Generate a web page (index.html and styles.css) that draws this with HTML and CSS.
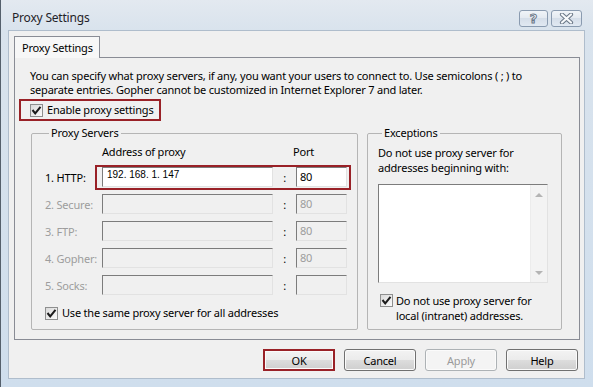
FILE: index.html
```html
<!DOCTYPE html>
<html lang="en">
<head>
    <meta charset="UTF-8">
    <title>Proxy Settings</title>
    <link rel="stylesheet" href="styles.css">
</head>
<body>
    <div class="window">
        <div class="titlebar">
            <span class="title">Proxy Settings</span>
            <div class="caption-btns">
                <button class="cap-btn help-btn">?</button>
                <button class="cap-btn close-btn">
                    <svg width="15" height="11" viewBox="0 0 15 11">
                        <path d="M3 1.5 L12 9.5 M12 1.5 L3 9.5" stroke="#6b7888" stroke-width="4.2" stroke-linecap="round"/>
                        <path d="M3 1.5 L12 9.5 M12 1.5 L3 9.5" stroke="#f7f9fb" stroke-width="2.2" stroke-linecap="round"/>
                    </svg>
                </button>
            </div>
        </div>

        <div class="client">
            <div class="tabs">
                <div class="tab">Proxy Settings</div>
            </div>

            <div class="panel">
                <p class="intro">You can specify what proxy servers, if any, you want your users to connect to. Use semicolons ( ; ) to<br>separate entries. Gopher cannot be customized in Internet Explorer 7 and later.</p>

                <label class="check highlight">
                    <span class="box"><svg width="11" height="11" viewBox="0 0 11 11"><path d="M1.5 5 L4.2 8.3 L9.5 1.8" fill="none" stroke="#1c1c1c" stroke-width="2"/></svg></span>
                    Enable proxy settings
                </label>

                <div class="groups">
                    <fieldset class="servers">
                        <legend>Proxy Servers</legend>
                        <div class="server-grid">
                            <span></span>
                            <span class="col-head">Address of proxy</span>
                            <span></span>
                            <span class="col-head port-head">Port</span>

                            <span class="row-label r1 c1">1. HTTP:</span>
                            <div class="field addr r1 c2">192. 168. 1. 147</div>
                            <span class="colon r1 c3">:</span>
                            <div class="field port r1 c4">80</div>
                            <div class="row-mark"></div>

                            <span class="row-label off">2. Secure:</span>
                            <div class="field off"></div>
                            <span class="colon">:</span>
                            <div class="field port off">80</div>

                            <span class="row-label off">3. FTP:</span>
                            <div class="field off"></div>
                            <span class="colon">:</span>
                            <div class="field port off">80</div>

                            <span class="row-label off">4. Gopher:</span>
                            <div class="field off"></div>
                            <span class="colon">:</span>
                            <div class="field port off">80</div>

                            <span class="row-label off">5. Socks:</span>
                            <div class="field off"></div>
                            <span class="colon">:</span>
                            <div class="field port off"></div>
                        </div>

                        <label class="check same">
                            <span class="box"><svg width="11" height="11" viewBox="0 0 11 11"><path d="M1.5 5 L4.2 8.3 L9.5 1.8" fill="none" stroke="#1c1c1c" stroke-width="2"/></svg></span>
                            Use the same proxy server for all addresses
                        </label>
                    </fieldset>

                    <fieldset class="exceptions">
                        <legend>Exceptions</legend>
                        <p class="exc-text">Do not use proxy server for<br>addresses beginning with:</p>
                        <div class="listbox">
                            <div class="scroll">
                                <span class="arrow up"></span>
                                <span class="arrow down"></span>
                            </div>
                        </div>
                        <label class="check local">
                            <span class="box"><svg width="11" height="11" viewBox="0 0 11 11"><path d="M1.5 5 L4.2 8.3 L9.5 1.8" fill="none" stroke="#1c1c1c" stroke-width="2"/></svg></span>
                            <span>Do not use proxy server for<br>local (intranet) addresses.</span>
                        </label>
                    </fieldset>
                </div>
            </div>

            <div class="actions">
                <button class="btn ok-btn">OK</button>
                <button class="btn">Cancel</button>
                <button class="btn" disabled>Apply</button>
                <button class="btn">Help</button>
            </div>
        </div>
    </div>
</body>
</html>
```

FILE: styles.css
```css
* {
    box-sizing: border-box;
}

body {
    margin: 0;
    font-family: "Noto Sans", sans-serif;
    font-size: 11px;
    letter-spacing: -0.2px;
    color: #000;
    background: #dbe5ef;
}

.window {
    width: 593px;
    height: 387px;
    display: flex;
    flex-direction: column;
    background: linear-gradient(#e3e9f0, #d9e3ed 30px, #cfdeed);
    border-left: 1px solid #55606c;
}

/* title bar */
.titlebar {
    height: 30px;
    display: flex;
    align-items: flex-start;
    padding: 10px 11px 0 11px;
}

.title {
    font-size: 12px;
    line-height: 16px;
    color: #1f2328;
}

.caption-btns {
    margin-left: auto;
    display: flex;
    gap: 3px;
}

.cap-btn {
    height: 17px;
    width: 29px;
    padding: 0;
    border: 1px solid #8a9bb0;
    border-radius: 3px;
    background: linear-gradient(#f0f4f8, #e3e9f0 50%, #d5dee9 50%, #e1e9f2);
    display: flex;
    align-items: center;
    justify-content: center;
}

.close-btn {
    width: 31px;
}

.help-btn {
    font-family: "DejaVu Sans", sans-serif;
    font-size: 13px;
    font-weight: bold;
    color: #f6f8fb;
    -webkit-text-stroke: 1px #6b7888;
    line-height: 15px;
}

/* client area */
.client {
    flex: 1;
    margin: 0 8px 8px 7px;
    border: 1px solid #afbdcc;
    background: #f0f0f0;
    padding: 5px 4px 0 5px;
    display: flex;
    flex-direction: column;
}

.tabs {
    display: flex;
}

.tab {
    width: 86px;
    height: 22px;
    margin-bottom: -1px;
    border: 1px solid #898c95;
    border-bottom: none;
    background: #f7f7f7;
    padding: 3px 0 0 7px;
    line-height: 16px;
    position: relative;
    z-index: 1;
}

.panel {
    height: 283px;
    border: 1px solid #898c95;
    background: #f0f0f0;
    padding: 11px 0 0 15px;
}

.intro {
    margin: 0;
    line-height: 14px;
}

/* checkboxes */
.check {
    display: flex;
    align-items: center;
    gap: 4px;
    line-height: 14px;
    white-space: nowrap;
}

.box {
    width: 13px;
    height: 13px;
    flex: none;
    border: 1px solid #8e8f8f;
    background: linear-gradient(135deg, #dadada, #fbfbfb);
    display: flex;
    align-items: center;
    justify-content: center;
}

.highlight {
    width: 142px;
    height: 22px;
    margin: 2px 0 0 -11px;
    padding: 0 0 0 9px;
    border: 2px solid #992127;
}

/* group boxes */
.groups {
    display: flex;
    gap: 9px;
    margin: 5px 0 0 1px;
}

fieldset {
    margin: 0;
    min-width: 0;
    border: 1px solid #b5b5b5;
    border-radius: 2px;
}

legend {
    margin-left: 4px;
    padding: 0 2px;
    line-height: 14px;
}

.servers {
    width: 327px;
    padding: 5px 0 9px 13px;
}

.server-grid {
    display: grid;
    grid-template-columns: 57px 171px 23px 51px;
    grid-template-rows: 15px repeat(5, 20px);
    row-gap: 7px;
}

.r1 { grid-row: 2; }
.c1 { grid-column: 1; }
.c2 { grid-column: 2; }
.c3 { grid-column: 3; }
.c4 { grid-column: 4; }

.col-head {
    line-height: 14px;
}

.port-head {
    margin-left: -3px;
}

.row-label {
    align-self: center;
}

.off {
    color: #9d9d9d;
}

.colon {
    justify-self: center;
    align-self: center;
    padding-top: 1px;
}

.field {
    height: 20px;
    border: 1px solid;
    border-color: #7c7c7c #e2e2e2 #e2e2e2 #7c7c7c;
    background: #fff;
    padding-left: 3px;
    line-height: 18px;
}

.field.off {
    background: #f0f0f0;
}

.addr {
    font-family: "Liberation Sans", sans-serif;
    font-size: 10px;
    letter-spacing: 0;
    line-height: 14px;
    padding-left: 4px;
}

.row-mark {
    grid-row: 2;
    grid-column: 2 / 5;
    margin: -2px -4px -3px -7px;
    border: 2px solid #992127;
    pointer-events: none;
}

.same {
    margin-top: 11px;
}

.exceptions {
    width: 195px;
    padding: 5px 0 0 10px;
}

.exc-text {
    margin: 0;
    line-height: 15px;
}

.listbox {
    width: 170px;
    height: 99px;
    margin-top: 9px;
    border: 1px solid;
    border-color: #7c7c7c #e2e2e2 #e2e2e2 #7c7c7c;
    background: #fff;
    display: flex;
    justify-content: flex-end;
}

.scroll {
    width: 17px;
    background: #f3f3f3;
    border-left: 1px solid #ececec;
    display: flex;
    flex-direction: column;
    justify-content: space-between;
    align-items: center;
    padding: 8px 0 7px;
}

.arrow {
    width: 0;
    height: 0;
    border-left: 4px solid transparent;
    border-right: 4px solid transparent;
}

.arrow.up {
    border-bottom: 4px solid #b4b4b4;
}

.arrow.down {
    border-top: 4px solid #b4b4b4;
}

.local {
    margin: 10px 0 0 2px;
    align-items: flex-start;
    gap: 3px;
    line-height: 15px;
}

.local .box {
    margin-top: 1px;
}

/* dialog buttons */
.actions {
    display: flex;
    justify-content: flex-end;
    gap: 9px;
    margin-top: 9px;
    padding-right: 2px;
}

.btn {
    width: 72px;
    height: 22px;
    border: 1px solid #707070;
    border-radius: 3px;
    background: linear-gradient(#f3f3f3, #ebebeb 50%, #dddddd 50%, #cfcfcf);
    box-shadow: inset 0 0 0 1px #fbfbfb;
    font-family: "Noto Sans", sans-serif;
    font-size: 11px;
    letter-spacing: -0.2px;
    color: #000;
    padding: 0;
}

.btn:disabled {
    border-color: #adb2b5;
    background: #f4f4f4;
    color: #9a9a9a;
}

.ok-btn {
    border: 2px solid #992127;
    border-radius: 0;
}
```
